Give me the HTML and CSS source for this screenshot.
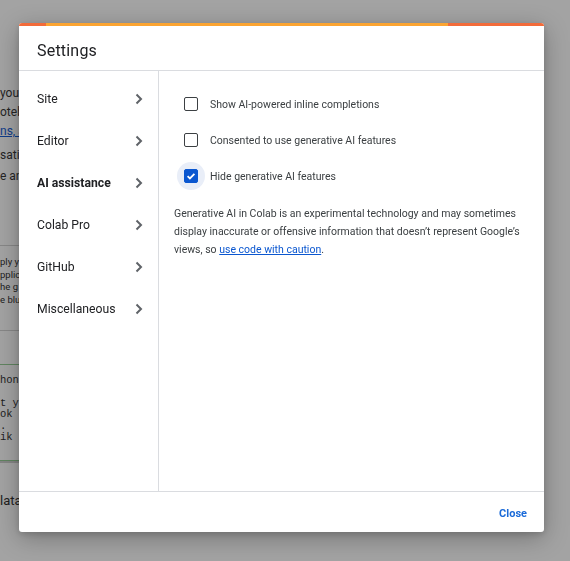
FILE: index.html
```html
<!DOCTYPE html>
<html>
<head>
<meta charset="utf-8">
<link rel="stylesheet" href="styles.css">
</head>
<body>
<div class="page">
  <div class="intro">
    <div>you</div>
    <div>oteb</div>
    <div><a class="lnk" href="#">ns, a</a></div>
  </div>
  <div class="intro2">
    <div>satio</div>
    <div>e an</div>
  </div>
  <div class="note">
    <div>ply y</div>
    <div>pplic</div>
    <div>he g</div>
    <div>e blu</div>
  </div>
  <div class="cell">
    <div class="code">hon</div>
    <div class="code gapc">t yo</div>
    <div class="code">ok i</div>
    <div class="code">.</div>
    <div class="code">ik c</div>
  </div>
  <div class="tail">lata</div>
</div>

<div class="backdrop"></div>

<div class="dialog">
  <div class="stripe"><span class="s1"></span><span class="s2"></span><span class="s3"></span></div>
  <div class="header">Settings</div>
  <div class="body">
    <nav class="sidebar">
      <div class="nav-item"><span>Site</span><svg class="chev" width="8" height="12" viewBox="0 0 8 12"><path d="M1.5 1.5 L6 6 L1.5 10.5" fill="none" stroke="#5f6368" stroke-width="2"/></svg></div>
      <div class="nav-item"><span>Editor</span><svg class="chev" width="8" height="12" viewBox="0 0 8 12"><path d="M1.5 1.5 L6 6 L1.5 10.5" fill="none" stroke="#5f6368" stroke-width="2"/></svg></div>
      <div class="nav-item active"><span>AI assistance</span><svg class="chev" width="8" height="12" viewBox="0 0 8 12"><path d="M1.5 1.5 L6 6 L1.5 10.5" fill="none" stroke="#5f6368" stroke-width="2"/></svg></div>
      <div class="nav-item"><span>Colab Pro</span><svg class="chev" width="8" height="12" viewBox="0 0 8 12"><path d="M1.5 1.5 L6 6 L1.5 10.5" fill="none" stroke="#5f6368" stroke-width="2"/></svg></div>
      <div class="nav-item"><span>GitHub</span><svg class="chev" width="8" height="12" viewBox="0 0 8 12"><path d="M1.5 1.5 L6 6 L1.5 10.5" fill="none" stroke="#5f6368" stroke-width="2"/></svg></div>
      <div class="nav-item"><span>Miscellaneous</span><svg class="chev" width="8" height="12" viewBox="0 0 8 12"><path d="M1.5 1.5 L6 6 L1.5 10.5" fill="none" stroke="#5f6368" stroke-width="2"/></svg></div>
    </nav>
    <section class="content">
      <label class="row"><span class="cb-wrap"><span class="box"></span></span><span>Show AI-powered inline completions</span></label>
      <label class="row"><span class="cb-wrap"><span class="box"></span></span><span>Consented to use generative AI features</span></label>
      <label class="row"><span class="cb-wrap checked"><span class="box on"><svg width="14" height="14" viewBox="0 0 14 14"><path d="M3.6 7.2 L5.9 9.4 L10.4 4.8" fill="none" stroke="#fff" stroke-width="1.8"/></svg></span></span><span>Hide generative AI features</span></label>
      <p class="desc">Generative AI in Colab is an experimental technology and may sometimes display inaccurate or offensive information that doesn’t represent Google’s views, so <a href="#" class="caution">use code with caution</a>.</p>
    </section>
  </div>
  <div class="footer"><button class="close">Close</button></div>
</div>
</body>
</html>
```

FILE: styles.css
```css
html, body {
  margin: 0;
  padding: 0;
  height: 100%;
  overflow: hidden;
  background: #fff;
  font-family: Roboto, "Liberation Sans", sans-serif;
}

.page {
  width: 19px;
  overflow: hidden;
  padding-top: 84px;
  color: #3a3a3a;
  font-size: 12px;
}

.intro div { line-height: 19px; height: 19px; white-space: nowrap; }
.lnk { color: #1a5fd6; text-decoration: underline; }
.intro2 { margin-top: 4px; }
.intro2 div { line-height: 21px; height: 21px; white-space: nowrap; }

.note {
  margin-top: 58px;
  border-top: 1px solid #d4d4d4;
  border-bottom: 1px solid #d4d4d4;
  padding: 10px 0 24px;
  font-size: 9.5px;
  color: #333;
}
.note div { line-height: 12.5px; height: 12.5px; white-space: nowrap; }

.cell {
  margin-top: 33px;
  border-top: 1.5px solid #96cf96;
  border-bottom: 1.5px solid #96cf96;
  box-shadow: 0 2px 0 #d0d0d0;
  padding: 10px 0 16px;
  margin-bottom: 2px;
}
.code {
  font-family: "Liberation Mono", "DejaVu Sans Mono", monospace;
  font-size: 10.5px;
  line-height: 11.6px;
  height: 11.6px;
  color: #333;
  white-space: nowrap;
}
.gapc { margin-top: 11px; }

.tail {
  margin-top: 32px;
  font-size: 13px;
  color: #333;
}

.backdrop {
  position: fixed;
  inset: 0;
  background: rgba(0, 0, 0, 0.36);
}

.dialog {
  position: absolute;
  left: 19px;
  top: 23px;
  width: 525px;
  height: 509px;
  background: #fff;
  border-radius: 3px;
  overflow: hidden;
  display: flex;
  flex-direction: column;
  box-shadow: 0 6px 24px rgba(0, 0, 0, 0.28), 0 2px 6px rgba(0, 0, 0, 0.15);
  color: #202124;
}

.stripe { height: 3px; display: flex; flex: none; }
.s1 { width: 27px; background: #f26b3a; }
.s2 { width: 402px; background: #fba431; }
.s3 { flex: 1; background: #f26b3a; }

.header {
  height: 45px;
  flex: none;
  box-sizing: border-box;
  padding: 5px 0 0 18px;
  display: flex;
  align-items: center;
  font-size: 16px;
  letter-spacing: 0.2px;
  border-bottom: 1px solid #dadce0;
}

.body {
  flex: 1;
  display: flex;
  min-height: 0;
}

.sidebar {
  width: 139px;
  flex: none;
  border-right: 1px solid #dadce0;
  padding-top: 7px;
}

.nav-item {
  height: 42px;
  display: flex;
  align-items: center;
  justify-content: space-between;
  padding: 0 15px 0 18px;
  font-size: 12.2px;
  color: #202124;
}
.nav-item.active { font-weight: 700; }

.content {
  flex: 1;
  padding: 15px 10px 0 15px;
  font-size: 10.5px;
  color: #3c4043;
}

.row {
  height: 36px;
  display: flex;
  align-items: center;
  gap: 5px;
  margin-left: 3px;
}

.cb-wrap {
  width: 28px;
  height: 28px;
  border-radius: 50%;
  display: flex;
  align-items: center;
  justify-content: center;
}
.cb-wrap.checked { background: #e9eef8; }

.box {
  width: 14px;
  height: 14px;
  box-sizing: border-box;
  border: 1.5px solid #3c4043;
  border-radius: 2px;
  display: flex;
  align-items: center;
  justify-content: center;
}
.box.on {
  background: #0b57d0;
  border-color: #0b57d0;
}
.box.on svg { flex: none; }

.desc {
  margin: 11px 0 0;
  line-height: 18px;
  color: #3c4043;
}
.caution { color: #0b57d0; text-decoration: underline; }

.footer {
  height: 40px;
  flex: none;
  border-top: 1px solid #dadce0;
  display: flex;
  align-items: center;
  justify-content: flex-end;
  padding-right: 9px;
}

.close {
  border: none;
  background: none;
  font-family: Roboto, "Liberation Sans", sans-serif;
  font-size: 11px;
  font-weight: 700;
  color: #1a6ad8;
  padding: 7px 8px 5px;
  cursor: pointer;
}
```
